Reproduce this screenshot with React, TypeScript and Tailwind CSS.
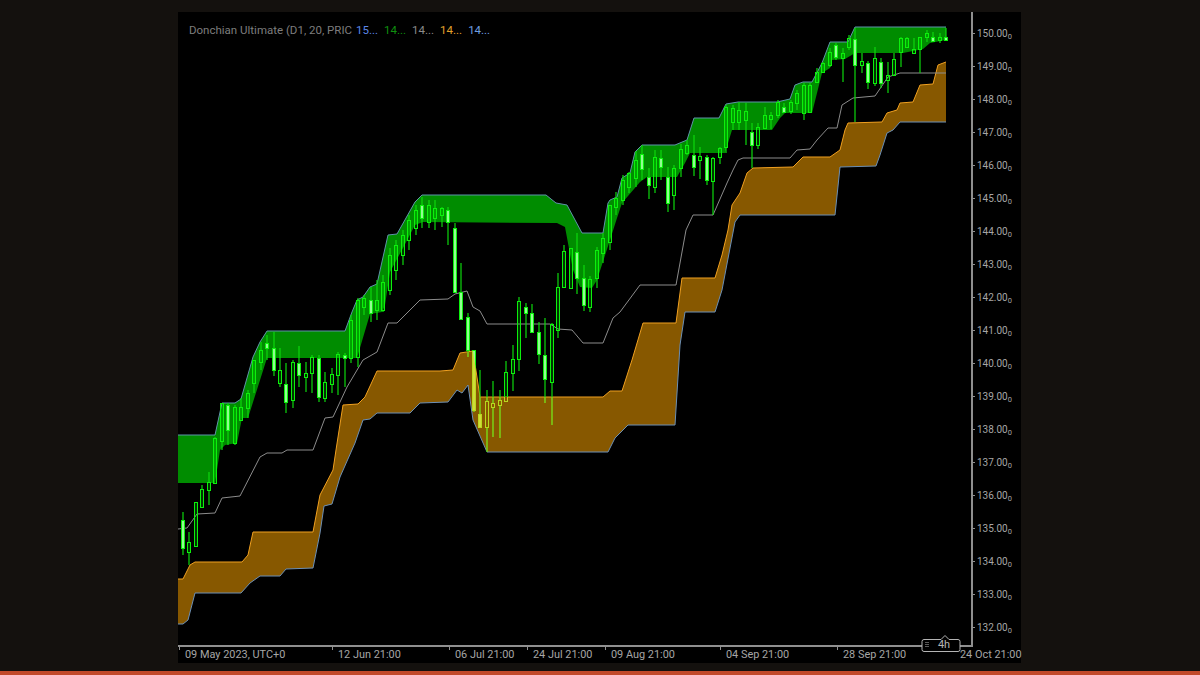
const upper = "178,435 215,435 222,403 235,403 241,399 253,357 260,342 267,331 345,331 352,312 357,300 363,297 370,287 377,284 388,235 397,234 415,202 422,195 546,195 556,203 567,205 582,233 603,233 608,203 610,200 617,197 622,178 630,173 635,152 642,145 675,145 687,140 694,118 719,118 726,104 738,102 777,102 790,99 795,85 803,82 812,82 822,63 830,42 848,42 855,27 946,27";
const lowerGreen = "946,40 930,43 923,49 903,53 855,53 845,59 832,60 830,68 822,73 812,113 785,113 780,118 772,130 732,130 725,153 690,153 685,163 677,177 647,177 640,182 622,203 617,218 610,240 597,280 592,288 580,287 573,270 565,227 557,223 423,222 415,225 403,248 390,272 385,305 382,312 370,314 357,358 267,358 248,418 242,418 237,443 225,445 220,450 215,483 178,483";
const orangeTop = "178,579 183,579 190,565 195,562 242,562 248,555 253,532 313,532 320,495 333,470 336,450 343,405 358,404 365,397 377,371 440,371 453,370 460,353 473,351 480,397 603,397 610,391 622,391 632,360 643,323 676,323 682,278 715,278 722,255 728,230 732,205 740,193 747,173 753,168 793,167 803,157 830,157 840,150 845,130 848,123 882,122 887,113 897,110 900,103 913,102 920,85 933,84 938,65 946,62";
const orangeBottom = "946,122 900,122 893,130 887,133 880,155 876,166 840,167 835,215 740,215 735,222 722,290 715,312 685,312 680,345 675,425 628,425 615,438 608,452 487,452 473,420 468,385 462,393 457,390 448,402 420,403 410,413 377,413 370,419 363,420 355,443 340,477 332,504 324,506 320,533 313,568 286,569 280,576 260,576 250,583 241,593 195,593 188,620 183,624 178,624";
const midLine = "178,529 187,528 197,514 215,513 222,498 240,496 260,457 267,453 282,453 287,450 313,450 325,418 333,417 347,387 363,360 377,352 388,323 397,323 420,300 448,299 455,294 467,291 473,307 480,311 487,324 550,324 558,329 572,330 583,343 603,343 613,318 620,312 640,285 676,285 686,230 693,215 713,215 727,183 733,170 738,160 743,158 790,158 797,150 810,149 817,140 828,128 837,128 842,105 853,98 875,96 888,77 900,73 946,73";

// wick top, body top, body bottom, wick bottom, bright
const bars: [number, number, number, number, number][] = [
  [512, 520, 548, 555, 1], [532, 542, 552, 565, 0], [502, 502, 546, 546, 0], [485, 489, 507, 507, 0], [472, 482, 490, 505, 0],
  [437, 438, 483, 483, 0], [403, 403, 441, 450, 0], [403, 405, 430, 445, 1], [405, 407, 443, 445, 0], [398, 407, 420, 420, 0],
  [390, 393, 408, 418, 0], [360, 360, 383, 393, 0], [342, 350, 362, 370, 0], [335, 343, 348, 360, 1], [332, 348, 370, 376, 1],
  [348, 370, 383, 387, 0], [363, 384, 402, 413, 1], [360, 362, 400, 408, 0], [346, 363, 375, 387, 1], [362, 373, 377, 392, 0],
  [355, 357, 373, 393, 0], [355, 358, 397, 402, 1], [372, 382, 398, 402, 0], [368, 374, 384, 393, 0], [352, 354, 375, 395, 0],
  [353, 355, 358, 387, 1], [315, 320, 358, 363, 0], [298, 300, 357, 367, 0], [295, 298, 307, 315, 0], [287, 300, 313, 322, 1],
  [280, 300, 310, 320, 0], [275, 282, 310, 312, 0], [248, 255, 290, 295, 0], [240, 245, 270, 280, 0], [230, 235, 255, 265, 0],
  [215, 220, 240, 250, 0], [205, 210, 228, 235, 0], [197, 205, 218, 228, 1], [200, 205, 222, 228, 0], [200, 208, 218, 230, 0],
  [207, 208, 215, 227, 0], [207, 210, 222, 245, 1], [223, 228, 292, 292, 1], [263, 292, 319, 319, 1], [313, 317, 350, 357, 1],
  [350, 350, 410, 412, 1], [370, 414, 427, 428, 1], [390, 401, 427, 452, 0], [381, 403, 407, 437, 0], [390, 400, 405, 438, 0],
  [361, 372, 401, 402, 0], [345, 359, 373, 391, 0], [297, 301, 359, 371, 0], [303, 307, 313, 338, 1], [304, 313, 332, 333, 1],
  [322, 332, 354, 364, 1], [318, 355, 379, 403, 1], [323, 324, 382, 425, 0], [273, 287, 330, 338, 0], [245, 251, 287, 288, 0],
  [248, 248, 288, 288, 0], [233, 252, 278, 294, 1], [265, 278, 305, 311, 1], [276, 279, 307, 312, 0], [247, 250, 278, 288, 0],
  [233, 238, 253, 263, 0], [205, 205, 242, 250, 0], [192, 198, 207, 215, 0], [175, 180, 200, 205, 0], [172, 173, 187, 193, 0],
  [151, 160, 178, 187, 0], [145, 154, 169, 180, 1], [168, 177, 185, 199, 1], [150, 157, 187, 193, 0], [150, 158, 167, 180, 1],
  [167, 177, 203, 212, 1], [165, 168, 195, 210, 0], [144, 149, 168, 177, 0], [140, 145, 153, 155, 0], [135, 155, 167, 176, 1],
  [147, 156, 160, 179, 0], [155, 157, 180, 185, 1], [157, 158, 181, 215, 0], [147, 148, 157, 164, 0], [105, 107, 147, 153, 0],
  [105, 108, 122, 130, 0], [102, 110, 122, 130, 0], [103, 111, 120, 145, 0], [123, 132, 145, 168, 1], [123, 127, 145, 149, 0],
  [107, 115, 128, 128, 0], [112, 115, 119, 129, 0], [100, 102, 115, 118, 0], [103, 107, 112, 113, 1], [100, 102, 111, 114, 0],
  [90, 93, 103, 110, 0], [83, 85, 113, 120, 0], [83, 85, 112, 113, 0], [68, 72, 82, 83, 0], [62, 63, 72, 73, 0],
  [48, 52, 65, 67, 0], [43, 45, 57, 60, 1], [48, 53, 58, 82, 0], [35, 38, 47, 50, 0], [28, 39, 65, 122, 1],
  [53, 61, 65, 73, 0], [61, 63, 82, 89, 1], [47, 58, 83, 86, 0], [58, 62, 83, 88, 1], [62, 75, 80, 93, 0],
  [53, 59, 75, 76, 0], [37, 38, 52, 67, 0], [37, 38, 47, 48, 0], [38, 49, 53, 53, 0], [37, 37, 49, 73, 0],
  [30, 33, 37, 42, 0], [32, 37, 41, 42, 1], [33, 37, 40, 43, 0], [28, 37, 40, 41, 1],
];

const prices = ["150.00", "149.00", "148.00", "147.00", "146.00", "145.00", "144.00", "143.00", "142.00", "141.00", "140.00", "139.00", "138.00", "137.00", "136.00", "135.00", "134.00", "133.00", "132.00"];

const times = [
  { label: "09 May 2023, UTC+0", w: "w-[153px]" },
  { label: "12 Jun 21:00", w: "w-[117px]" },
  { label: "06 Jul 21:00", w: "w-[78px]" },
  { label: "24 Jul 21:00", w: "w-[78px]" },
  { label: "09 Aug 21:00", w: "w-[115px]" },
  { label: "04 Sep 21:00", w: "w-[117px]" },
  { label: "28 Sep 21:00", w: "w-[117px]" },
  { label: "24 Oct 21:00", w: "w-[70px]" },
];

const Candles = ({ stroke, wick, fill, hollow }: { stroke: string; wick: string; fill: string; hollow: string }) => (
  <>
    {bars.map(([high, top, bottom, low, bright], i) => {
      const x = Math.round(183 + i * 6.466);
      return (
        <g key={i}>
          <path d={`M${x} ${high}V${top}M${x} ${bottom}V${low}`} stroke={wick} strokeWidth="1.2" fill="none" />
          <rect x={x - 1.5} y={top + 0.5} width="3" height={Math.max(bottom - top, 2)} stroke={stroke} strokeWidth="1" fill={bright ? fill : hollow} />
        </g>
      );
    })}
  </>
);

const PriceChart = () => (
  <svg width="793" height="633" viewBox="178 12 793 633" className="block blur-[0.3px]">
    <defs>
      <clipPath id="orange-band">
        <polygon points={`${orangeTop} ${orangeBottom}`} />
      </clipPath>
    </defs>
    <polygon points={`${upper} ${lowerGreen}`} fill="#008c00" />
    <polygon points={`${orangeTop} ${orangeBottom}`} fill="#875800" />
    <polyline points={upper} fill="none" stroke="#5f93a8" strokeWidth="1" />
    <polyline points={orangeBottom} fill="none" stroke="#6c8fb5" strokeWidth="1" />
    <polyline points={orangeTop} fill="none" stroke="#f0a020" strokeWidth="1" />
    <polyline points={midLine} fill="none" stroke="#8c8c8c" strokeWidth="1" />
    <Candles stroke="#0cf00c" wick="#0cd80c" fill="#90ff90" hollow="rgba(0,255,0,0.2)" />
    <g clipPath="url(#orange-band)">
      <Candles stroke="#b8d81e" wick="#a8c018" fill="#d0dc3a" hollow="#875800" />
    </g>
  </svg>
);

export default function App() {
  return (
    <div className="w-[1200px] h-[675px] flex flex-col bg-[#14110e] overflow-hidden font-['Roboto','Liberation_Sans',sans-serif] text-[10.9px] text-[#a6a6a6]">
      <div className="flex-1 pt-[12px] pl-[178px] pr-[179px] pb-[8px] flex">
        <div className="flex-1 flex flex-col bg-black">
          <div className="flex h-[633px]">
            <div className="relative w-[793px]">
              <PriceChart />
              <div className="absolute left-[11px] top-[11px] flex gap-[6px] text-[11.5px] leading-[14px]">
                <span className="text-[#7d7d7d] -mr-[2px]">Donchian Ultimate (D1, 20, PRIC</span>
                <span className="text-[#5c86e8]">15...</span>
                <span className="text-[#0f8f0f]">14...</span>
                <span className="text-[#8a8a8a]">14...</span>
                <span className="text-[#e2a02c]">14...</span>
                <span className="text-[#6f9fe0]">14...</span>
              </div>
            </div>
            <div className="flex-1 border-l-2 border-[#8f8f8f] pt-[5px] flex flex-col text-[10px]">
              {prices.map((p) => (
                <div key={p} className="h-[33px] shrink-0 flex items-center gap-[2px] leading-none">
                  <span className="w-[2px] h-px bg-[#8f8f8f]" />
                  <span className="whitespace-nowrap">
                    {p}
                    <span className="text-[7.5px] relative top-[2px]">0</span>
                  </span>
                </div>
              ))}
            </div>
          </div>
          <div className="relative h-[18px] border-t-2 border-[#8f8f8f] w-[795px] flex pl-[7px] pt-[1px] leading-[14px] whitespace-nowrap">
            {times.map((t) => (
              <span key={t.label} className={`${t.w} shrink-0 relative`}>
                <span className="absolute left-[-6px] top-[-1px] w-px h-[3px] bg-[#8f8f8f]" />
                {t.label}
              </span>
            ))}
            <div className="absolute left-[743px] top-[-9px] w-[40px] h-[13px] flex items-center justify-center text-[11px] leading-none text-[#b4b4b4]">
              <svg width="40" height="20" viewBox="0 0 40 20" className="absolute left-0 top-[-6px]" fill="none">
                <path d="M3 7.5H20L24 3.5L28 7.5H37Q39 7.5 39 9.5V17.5Q39 19.5 37 19.5H3Q1 19.5 1 17.5V9.5Q1 7.5 3 7.5Z" fill="#000" stroke="#b4b4b4" strokeWidth="1" />
                <path d="M5 10V16M7 10V16" stroke="#b4b4b4" strokeWidth="1" strokeDasharray="1 1" />
              </svg>
              <span className="relative left-[3px]">4h</span>
            </div>
          </div>
        </div>
      </div>
      <div className="h-[4px] bg-[#c2492a]" />
    </div>
  );
}
